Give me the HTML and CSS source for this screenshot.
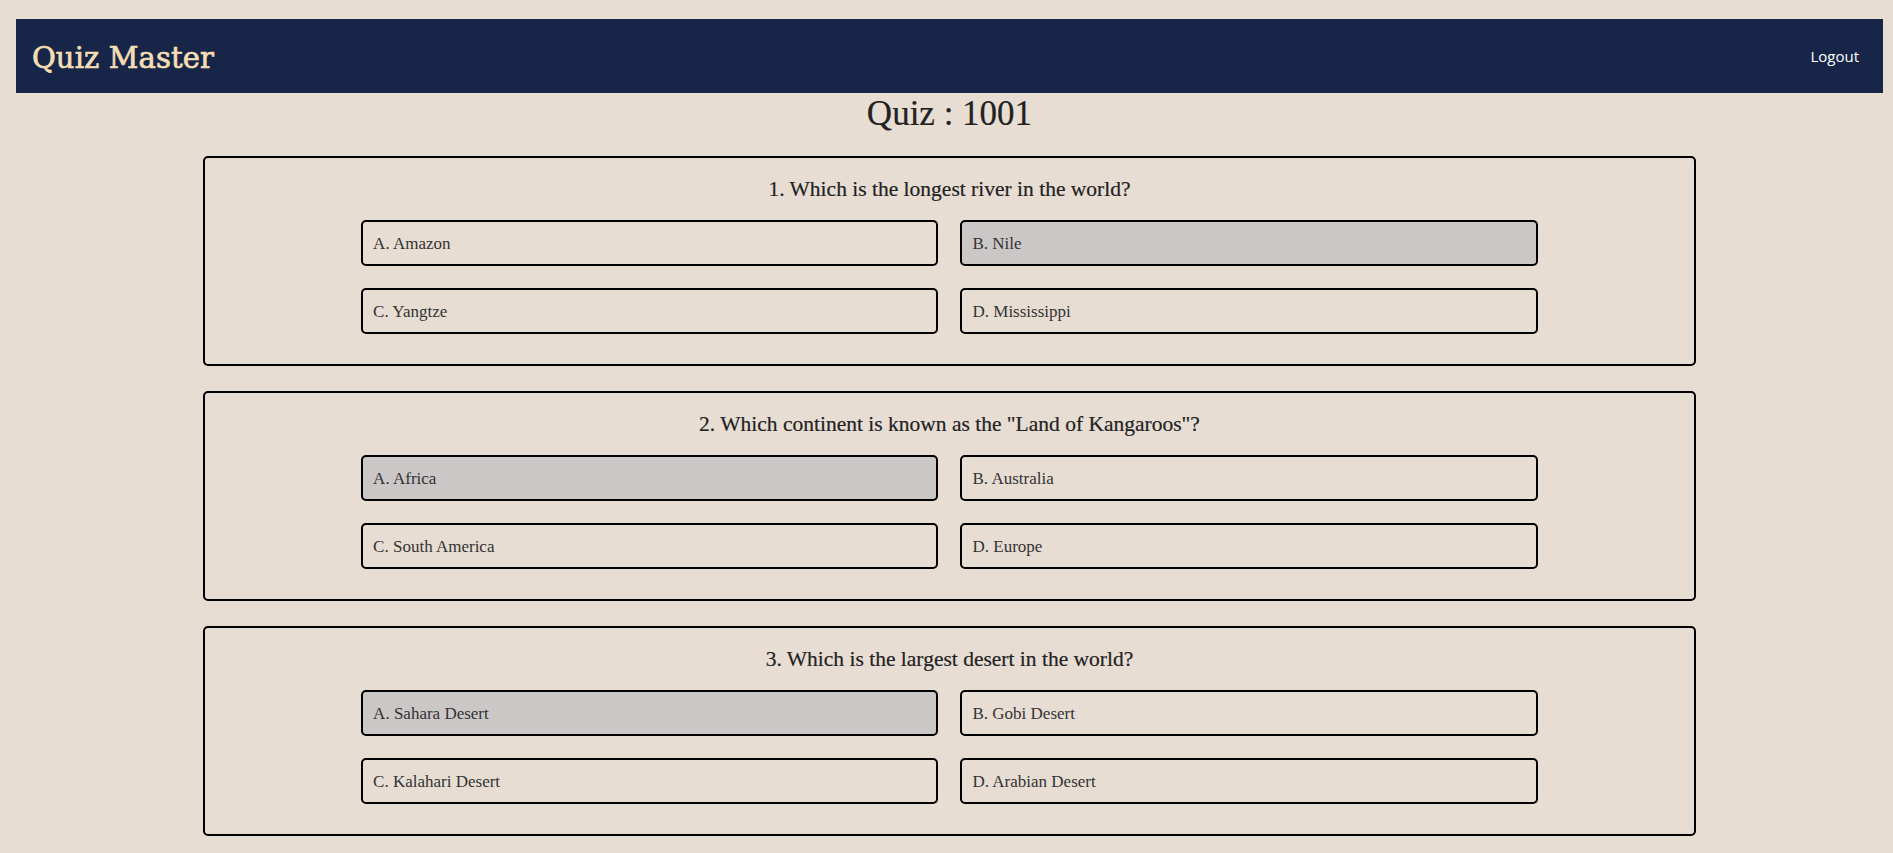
FILE: index.html
```html
<!DOCTYPE html>
<html lang="en">
<head>
<meta charset="utf-8">
<title>Quiz Master</title>
<link rel="stylesheet" href="styles.css">
</head>
<body>
<div class="page">
  <header class="navbar">
    <div class="brand">Quiz Master</div>
    <a class="logout" href="#">Logout</a>
  </header>
  <h1 class="quiz-title">Quiz : 1001</h1>
  <main class="questions">
    <section class="card">
      <p class="question">1. Which is the longest river in the world?</p>
      <div class="options">
        <div class="option">A. Amazon</div>
        <div class="option selected">B. Nile</div>
        <div class="option">C. Yangtze</div>
        <div class="option">D. Mississippi</div>
      </div>
    </section>
    <section class="card">
      <p class="question">2. Which continent is known as the "Land of Kangaroos"?</p>
      <div class="options">
        <div class="option selected">A. Africa</div>
        <div class="option">B. Australia</div>
        <div class="option">C. South America</div>
        <div class="option">D. Europe</div>
      </div>
    </section>
    <section class="card">
      <p class="question">3. Which is the largest desert in the world?</p>
      <div class="options">
        <div class="option selected">A. Sahara Desert</div>
        <div class="option">B. Gobi Desert</div>
        <div class="option">C. Kalahari Desert</div>
        <div class="option">D. Arabian Desert</div>
      </div>
    </section>
  </main>
</div>
</body>
</html>
```

FILE: styles.css
```css
html, body {
  margin: 0;
  padding: 0;
  background: #e7ddd3;
}

body {
  font-family: "Liberation Serif", "DejaVu Serif", serif;
  color: #222;
}

.page {
  padding: 19px 10px 40px 16px;
}

.navbar {
  height: 74px;
  background: #172648;
  display: flex;
  align-items: center;
  justify-content: space-between;
  padding: 0 24px 0 16px;
}

.brand {
  font-family: "DejaVu Serif", serif;
  font-size: 29px;
  color: #f5deb3;
  -webkit-text-stroke: 0.7px #f5deb3;
  letter-spacing: 0.1px;
  padding-top: 3px;
}

.logout {
  font-family: "Open Sans", "Noto Sans", sans-serif;
  font-size: 15px;
  color: #ffffff;
  text-decoration: none;
}

.quiz-title {
  margin: 1px 0 23px;
  text-align: center;
  font-family: "Liberation Serif", serif;
  font-weight: normal;
  font-size: 35px;
  line-height: 39px;
  color: #222;
  -webkit-text-stroke: 0.2px #222;
}

.questions {
  display: flex;
  flex-direction: column;
  align-items: center;
  gap: 25px;
}

.card {
  width: 80%;
  box-sizing: border-box;
  border: 2px solid #000;
  border-radius: 5px;
  padding: 18px 0 30px;
}

.question {
  margin: 0 0 18px;
  text-align: center;
  font-size: 21.5px;
  line-height: 26px;
  color: #222;
  -webkit-text-stroke: 0.2px #222;
}

.options {
  width: 79%;
  margin: 0 auto;
  display: grid;
  grid-template-columns: 1fr 1fr;
  column-gap: 22px;
  row-gap: 22px;
}

.option {
  height: 46px;
  box-sizing: border-box;
  border: 2px solid #000;
  border-radius: 5px;
  padding: 1px 10px 0;
  display: flex;
  align-items: center;
  font-size: 17px;
  color: #333;
}

.option.selected {
  background: #cbc7c6;
}
```
